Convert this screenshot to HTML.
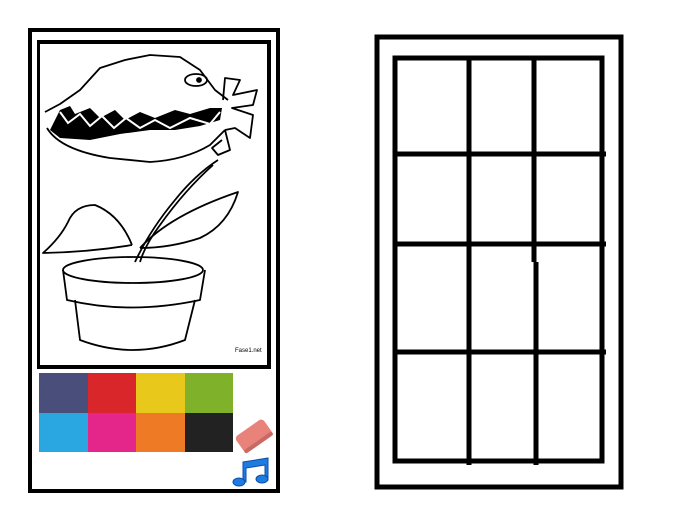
<!DOCTYPE html>
<html><head><meta charset="utf-8"><style>
html,body{margin:0;padding:0;background:#fff;width:680px;height:520px;overflow:hidden;font-family:"Liberation Sans",sans-serif}
.a{position:absolute;box-sizing:border-box}
</style></head><body>
<div class="a" style="left:28px;top:28px;width:252px;height:465px;border:4px solid #000"></div>
<div class="a" style="left:37px;top:40px;width:234px;height:329px;border:4px solid #000;border-left-width:3px"></div>
<svg class="a" style="left:0;top:0" width="680" height="520" viewBox="0 0 680 520">
<g fill="none" stroke="#000" stroke-width="1.8" stroke-linejoin="round">
<path d="M45 112 L60 104 L80 90 L100 68 L125 60 L150 55 L180 57 L200 70 L215 90 L228 100"/>
<path d="M47 128 Q60 150 110 158 L150 162 Q185 160 210 145 L225 130"/>
<ellipse cx="196" cy="80" rx="11" ry="6"/>
<circle cx="199" cy="80" r="2" fill="#000"/>
<path d="M223 100 L225 78 L240 80 L233 95 L257 90 L253 105 L232 108 L253 115 L250 138 L235 128 L225 130"/>
<path d="M225 130 L230 150 L218 155 L212 148 L222 140"/>
<path d="M218 160 Q195 175 175 200 Q150 230 135 262"/>
<path d="M213 165 Q185 190 160 225 Q145 245 140 262"/>
<path d="M132 245 Q120 215 95 205 Q75 205 68 222 Q60 238 43 253 Q90 252 132 245"/>
<path d="M140 248 Q170 215 238 192 Q228 225 200 238 Q170 248 140 248"/>
<ellipse cx="133" cy="270" rx="70" ry="13"/>
<path d="M63 270 L67 300 Q130 315 200 300 L205 270"/>
<path d="M75 300 L80 340 Q133 360 185 340 L195 300"/>
</g>
<g fill="#000">
<path d="M60 110 L70 106 L75 114 L90 108 L100 118 L115 110 L125 120 L140 112 L155 118 L175 110 L190 114 L210 108 L222 108 L220 120 L200 126 L175 130 L150 130 L120 134 L90 140 L60 138 L50 130 L55 120Z"/>
</g>
<path d="M60 112 L68 123 L80 114 L90 126 L102 116 L114 128 L126 118 L140 128 L155 120 L170 128 L190 118 L210 124 L220 112" fill="none" stroke="#fff" stroke-width="2"/>
<text x="235" y="352" font-size="6" fill="#000" font-family="Liberation Sans,sans-serif">Fase1.net</text>
<g transform="translate(254,436) rotate(-35)"><rect x="-17" y="-10" width="34" height="20" rx="4" fill="#e8827a"/><rect x="-17" y="6" width="34" height="4" rx="2" fill="#c86a64"/></g>
<g fill="#1e7be0" stroke="#0a4fa8" stroke-width="1">
<path d="M243 462 L268 458 L268 480 L265 480 L265 465 L246 468 L246 482 L243 482Z"/>
<ellipse cx="239" cy="482" rx="6" ry="4"/>
<ellipse cx="262" cy="479" rx="6" ry="4"/>
</g>
<g stroke="#000" stroke-width="5" fill="none">
<rect x="377" y="37" width="244" height="450"/>
<rect x="395" y="58" width="207" height="403"/>
<line x1="469" y1="58" x2="469" y2="465"/>
<line x1="534" y1="58" x2="534" y2="262"/>
<line x1="536" y1="262" x2="536" y2="465"/>
<line x1="395" y1="154" x2="606" y2="154"/>
<line x1="395" y1="244" x2="606" y2="244"/>
<line x1="395" y1="352" x2="606" y2="352"/>
</g>
</svg>
<div class="a" style="left:39px;top:373px;width:194px;height:79px;display:grid;grid-template-columns:repeat(4,1fr);grid-template-rows:1fr 1fr">
<div style="background:#4a4e7a"></div><div style="background:#d8262a"></div><div style="background:#e8c81a"></div><div style="background:#7fb12a"></div>
<div style="background:#2aa6e0"></div><div style="background:#e4268a"></div><div style="background:#ef7a26"></div><div style="background:#222"></div>
</div>
</body></html>
